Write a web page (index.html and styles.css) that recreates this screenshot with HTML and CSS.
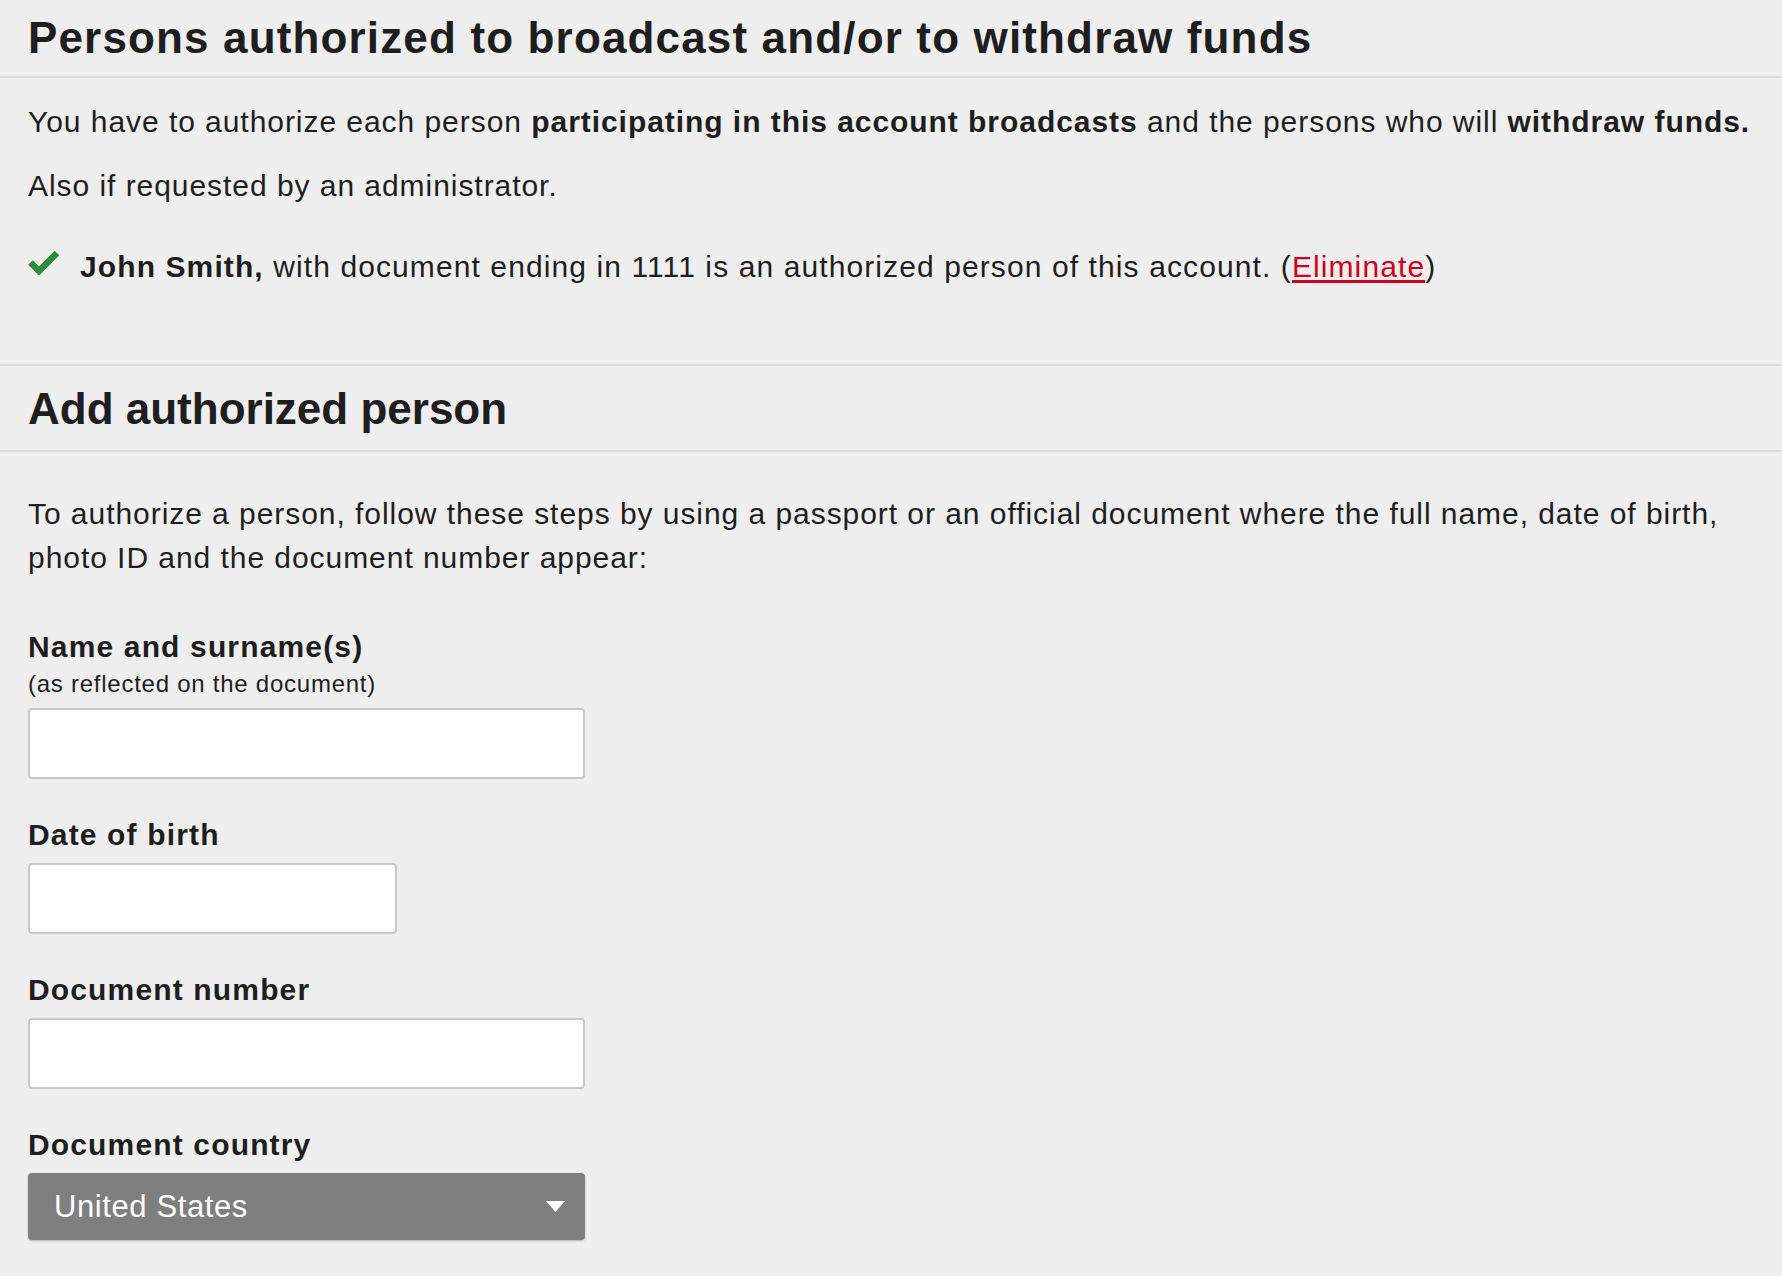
FILE: index.html
```html
<!DOCTYPE html>
<html lang="en">
<head>
<meta charset="utf-8">
<title>Authorized persons</title>
<link rel="stylesheet" href="styles.css">
</head>
<body>
<section class="block">
  <h1 class="title title-first">Persons authorized to broadcast and/or to withdraw funds</h1>
  <div class="content">
    <p class="text single">You have to authorize each person <strong>participating in this account broadcasts</strong> and the persons who will <strong>withdraw funds.</strong></p>
    <p class="text">Also if requested by an administrator.</p>
    <ul class="persons">
      <li class="person">
        <svg class="check" width="32" height="25" viewBox="0 0 32 25" aria-hidden="true"><polyline points="2.5,12.5 11,21 29,3" fill="none" stroke="#2f8a3f" stroke-width="6.5" stroke-linecap="butt" stroke-linejoin="miter"/></svg>
        <span><strong>John Smith,</strong> with document ending in 1111 is an authorized person of this account. (<a class="link" href="#">Eliminate</a>)</span>
      </li>
    </ul>
  </div>
</section>
<section class="block">
  <h2 class="title title-second">Add authorized person</h2>
  <div class="content form">
    <p class="text intro">To authorize a person, follow these steps by using a passport or an official document where the full name, date of birth, photo ID and the document number appear:</p>
    <div class="field">
      <label class="label">Name and surname(s)</label>
      <div class="hint">(as reflected on the document)</div>
      <div class="input wide"></div>
    </div>
    <div class="field">
      <label class="label">Date of birth</label>
      <div class="input narrow"></div>
    </div>
    <div class="field">
      <label class="label">Document number</label>
      <div class="input wide"></div>
    </div>
    <div class="field">
      <label class="label">Document country</label>
      <div class="select wide">
        <span>United States</span>
        <svg class="caret" width="19" height="11" viewBox="0 0 19 11" aria-hidden="true"><polygon points="0,0 19,0 9.5,11" fill="#ffffff"/></svg>
      </div>
    </div>
  </div>
</section>
</body>
</html>
```
FILE: styles.css
```css
html, body {
  margin: 0;
  padding: 0;
  background: #eeeeee;
}
body {
  font-family: "Liberation Sans", Arial, sans-serif;
  color: #1e1e1e;
  width: 1782px;
  height: 1276px;
  overflow: hidden;
}
.title {
  margin: 0;
  font-size: 44px;
  line-height: 52px;
  font-weight: bold;
  padding: 0 28px;
  border-bottom: 2px solid #dcdcdc;
}
.title-first {
  padding-top: 12px;
  padding-bottom: 12px;
  letter-spacing: 1.15px;
}
.title-second {
  padding-top: 17px;
  padding-bottom: 15px;
}
.block + .block {
  border-top: 2px solid #dcdcdc;
}
.content {
  padding: 0 28px;
}
.text {
  margin: 0;
  font-size: 30px;
  line-height: 44px;
  letter-spacing: 0.95px;
}
.single {
  white-space: nowrap;
}
.text + .text {
  margin-top: 20px;
}
.block:first-child .content {
  padding-top: 22px;
  padding-bottom: 75px;
}
.persons {
  list-style: none;
  margin: 37px 0 0;
  padding: 0;
}
.person {
  display: flex;
  align-items: flex-start;
  gap: 20px;
  font-size: 30px;
  line-height: 44px;
  letter-spacing: 1.1px;
}
.check {
  margin-top: 5px;
  flex: none;
}
.link {
  color: #d0021b;
  text-decoration: underline;
  text-underline-offset: 3px;
}
.form {
  padding-top: 40px;
}
.intro {
  margin-bottom: 49px;
}
.field {
  display: flex;
  flex-direction: column;
  align-items: flex-start;
  margin-bottom: 38px;
}
.label {
  font-size: 30px;
  line-height: 36px;
  font-weight: bold;
  letter-spacing: 1.15px;
  margin-bottom: 10px;
}
.hint {
  font-size: 24px;
  line-height: 30px;
  letter-spacing: 0.75px;
  margin-top: -6px;
  margin-bottom: 9px;
}
.input {
  box-sizing: border-box;
  height: 71px;
  background: #ffffff;
  border: 2px solid #c9c9c9;
  border-radius: 4px;
}
.wide {
  width: 557px;
}
.narrow {
  width: 369px;
}
.select {
  box-sizing: border-box;
  height: 67px;
  background: #7f7f7f;
  border-radius: 4px;
  box-shadow: 0 1px 2px rgba(0, 0, 0, 0.25);
  color: #ffffff;
  font-size: 31px;
  letter-spacing: 0.6px;
  display: flex;
  align-items: center;
  justify-content: space-between;
  padding: 0 20px 0 26px;
}
.caret {
  flex: none;
}
```
